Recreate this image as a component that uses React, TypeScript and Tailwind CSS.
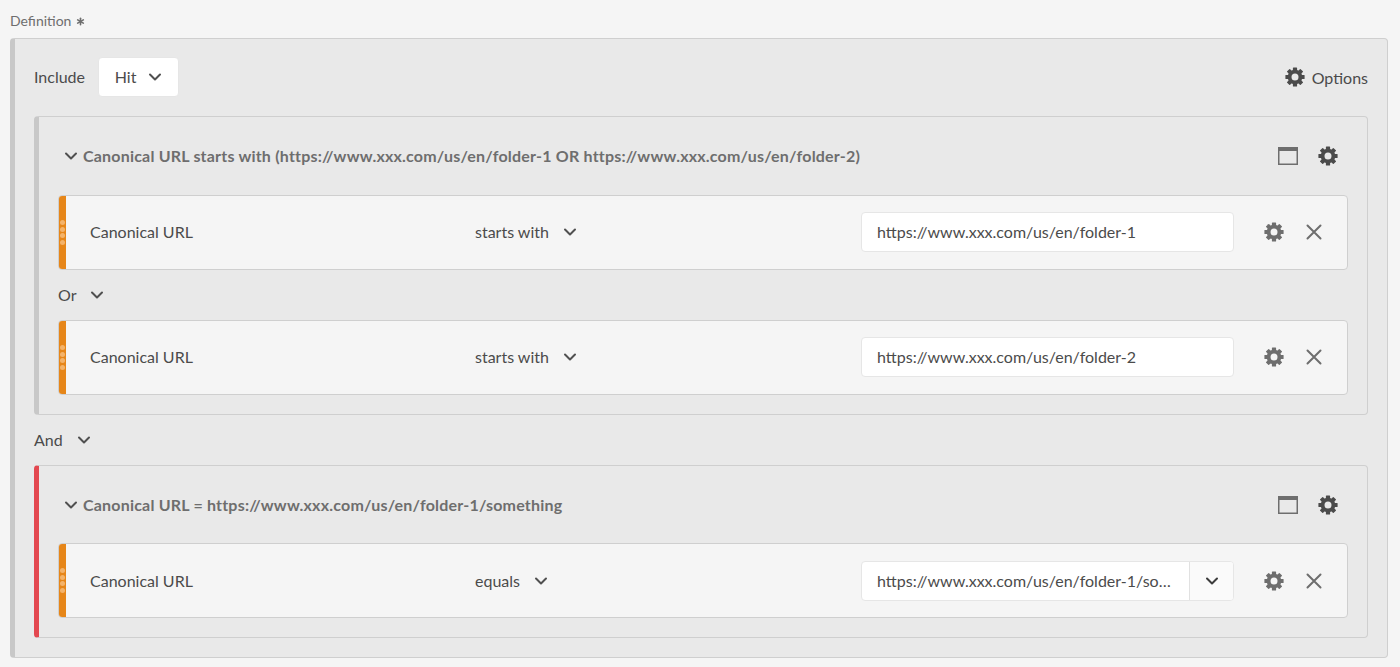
import { Asterisk } from 'lucide-react';

const fontStack = { fontFamily: '"Lato", "Noto Sans", sans-serif' };

function Gear({ className }: { className: string }) {
  return (
    <svg viewBox="0 0 20 20" width="20" height="20" className={className} fill="currentColor">
      {[0, 45, 90, 135, 180, 225, 270, 315].map((a) => (
        <rect key={a} x="7.9" y="0.4" width="4.2" height="4.6" rx="0.6" transform={`rotate(${a} 10 10)`} />
      ))}
      <circle cx="10" cy="10" r="5.4" fill="none" stroke="currentColor" strokeWidth="3.8" />
    </svg>
  );
}

function Chevron({ className = 'text-[#505050]' }: { className?: string }) {
  return (
    <svg viewBox="0 0 14 14" width="14" height="14" className={className} fill="none" stroke="currentColor" strokeWidth="2" strokeLinecap="round" strokeLinejoin="round">
      <polyline points="2,4.5 7,9.5 12,4.5" />
    </svg>
  );
}

function Close() {
  return (
    <svg viewBox="0 0 16 16" width="16" height="16" className="text-[#6e6e6e]" fill="none" stroke="currentColor" strokeWidth="2" strokeLinecap="round">
      <path d="M1.5 1.5 14.5 14.5M14.5 1.5 1.5 14.5" />
    </svg>
  );
}

function WindowIcon() {
  return (
    <svg viewBox="0 0 20 18" width="20" height="18" className="text-[#6e6e6e]">
      <rect x="0.75" y="0.75" width="18.5" height="16.5" fill="none" stroke="currentColor" strokeWidth="1.5" />
      <rect x="0" y="0" width="20" height="4" fill="currentColor" />
    </svg>
  );
}

function Rule({ op, value, combo }: { op: string; value: string; combo?: boolean }) {
  // the combo row sits a pixel lower in its card than the plain ones
  const lift = combo ? '' : 'mb-[2px]';
  return (
    <div className="flex h-[75px] items-center rounded-[4px] border border-[#cfcfcf] bg-[#f5f5f5]">
      <div className="flex h-full w-[7px] shrink-0 flex-col items-center justify-center gap-[1.5px] rounded-l-[3px] bg-[#e68619]">
        {[0, 1, 2, 3].map((i) => (
          <span key={i} className="block h-[5px] w-[5px] rounded-full bg-[#f4b36a]" />
        ))}
      </div>
      <div className={`w-[409px] pl-[24px] text-[16px] text-[#4b4b4b] ${lift}`}>Canonical URL</div>
      <div className={`flex w-[386px] items-center gap-[14px] text-[16px] text-[#4b4b4b] ${lift}`}>
        <span>{op}</span>
        <Chevron />
      </div>
      <div className={`flex h-[40px] w-[373px] overflow-hidden rounded-[4px] border border-[#e6e6e6] bg-white text-[16px] text-[#4b4b4b] ${lift}`}>
        <div className="flex min-w-0 flex-1 items-center pl-[15px] pr-[8px]">
          <span>{value}</span>
        </div>
        {combo && (
          <div className="flex w-[44px] items-center justify-center border-l border-[#e1e1e1] bg-[#fafafa]">
            <Chevron className="text-[#3c3c3c]" />
          </div>
        )}
      </div>
      <div className={`ml-[30px] flex items-center gap-[22px] ${lift}`}>
        <Gear className="text-[#6e6e6e]" />
        <Close />
      </div>
    </div>
  );
}

function Group({ title, accent, head, children }: { title: string; accent: string; head: string; children: React.ReactNode }) {
  return (
    <div className={`rounded-[4px] border border-l-[5px] border-[#cfcfcf] bg-[#e9e9e9] pb-[19px] pl-[19px] pr-[19px] ${accent}`}>
      <div className={`flex items-center pl-[6px] ${head}`}>
        <Chevron />
        <span className="ml-[5px] text-[16px] font-bold tracking-[0.2px] text-[#6e6e6e]">{title}</span>
        <div className="ml-auto mr-[10px] flex items-center gap-[20px]">
          <WindowIcon />
          <Gear className="text-[#4b4b4b]" />
        </div>
      </div>
      {children}
    </div>
  );
}

export default function App() {
  return (
    <div className="h-[667px] overflow-hidden bg-[#f5f5f5] pl-[10px] pr-[12px]" style={fontStack}>
      <div className="flex h-[38px] items-center gap-[3px] pt-[3px] text-[14px] text-[#6e6e6e]">
        <span>Definition</span>
        <Asterisk size={13} strokeWidth={3} className="mt-[1px]" />
      </div>
      <div className="h-[620px] rounded-[4px] border border-l-[5px] border-[#cfcfcf] border-l-[#c8c8c8] bg-[#e9e9e9] pl-[19px] pr-[19px]">
        <div className="flex h-[77px] items-center pb-[2px] text-[#4b4b4b]">
          <span className="text-[16px]">Include</span>
          <div className="ml-[13px] flex h-[40px] w-[81px] items-center justify-center gap-[12px] rounded-[4px] border border-[#e6e6e6] bg-white text-[16px]">
            <span>Hit</span>
            <Chevron />
          </div>
          <div className="ml-auto flex items-center gap-[7px] text-[16px]">
            <Gear className="text-[#4b4b4b]" />
            <span className="mt-[2px]">Options</span>
          </div>
        </div>
        <Group title="Canonical URL starts with (https://www.xxx.com/us/en/folder-1 OR https://www.xxx.com/us/en/folder-2)" accent="border-l-[#c8c8c8]" head="h-[78px]">
          <Rule op="starts with" value="https://www.xxx.com/us/en/folder-1" />
          <div className="flex h-[50px] items-center gap-[14px] text-[16px] text-[#4b4b4b]">
            <span>Or</span>
            <Chevron />
          </div>
          <Rule op="starts with" value="https://www.xxx.com/us/en/folder-2" />
        </Group>
        <div className="flex h-[50px] items-center gap-[14px] text-[16px] text-[#4b4b4b]">
          <span>And</span>
          <Chevron />
        </div>
        <Group title="Canonical URL = https://www.xxx.com/us/en/folder-1/something" accent="border-l-[#e34850]" head="h-[77px]">
          <Rule op="equals" value="https://www.xxx.com/us/en/folder-1/so…" combo />
        </Group>
      </div>
    </div>
  );
}
